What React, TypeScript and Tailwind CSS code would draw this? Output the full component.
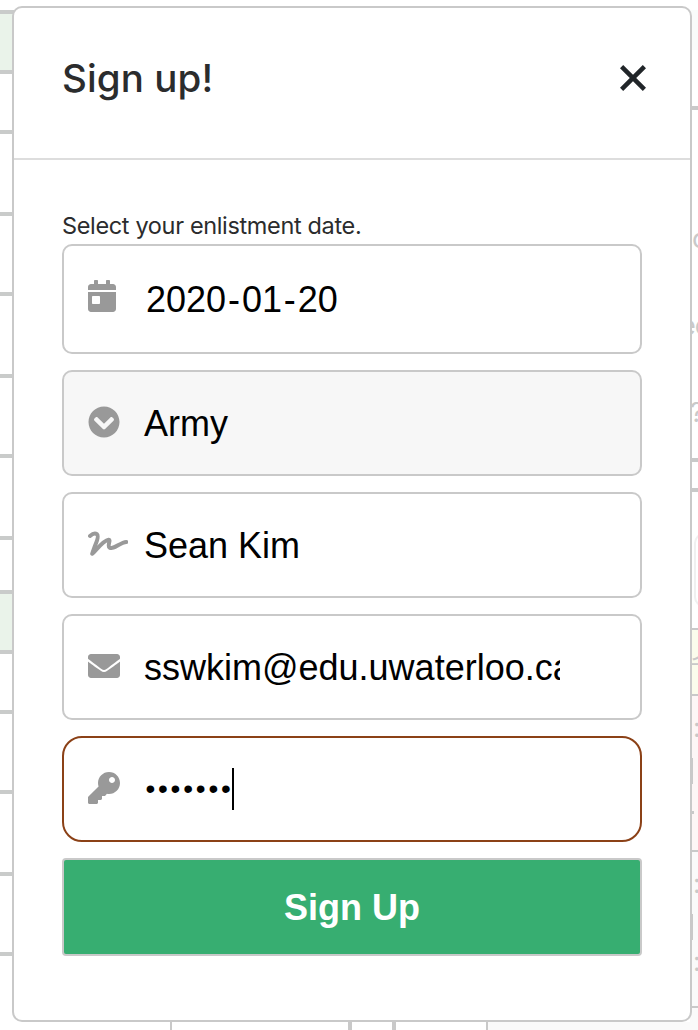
import type { ReactNode } from "react";
import { FaCalendarDay, FaChevronCircleDown, FaEnvelope, FaKey } from "react-icons/fa";

const leftRows = [
  "h-[60px] bg-[#eaf3ea]",
  "h-[60px]",
  "h-[82px]",
  "h-[80px]",
  "h-[82px]",
  "h-[80px]",
  "h-[82px]",
  "h-[54px]",
  "h-[60px] bg-[#eaf3ea]",
  "h-[60px]",
  "h-[80px]",
  "h-[82px]",
  "h-[80px]",
  "h-[70px]",
];

function Backdrop() {
  return (
    <div className="flex h-[1030px] flex-col bg-white">
      <div className="flex h-[1022px] justify-between">
        <div className="w-[14px] pt-[10px]">
          {leftRows.map((row, i) => (
            <div key={i} className={"border-t-4 border-[#c9cbca] " + row} />
          ))}
        </div>
        <div className="w-[8px] overflow-hidden pt-[10px] font-['Inter',sans-serif] text-[27px] leading-[30px] text-[#c9c9c9]">
          <div className="h-[40px] bg-[#f9fbfa]" />
          <div className="mt-[56px] h-[352px] border-t-4 border-[#c9c9c9] pt-[114px]">
            <div className="h-[87px] pl-[2px]">c</div>
            <div className="-ml-[10px] h-[87px] whitespace-nowrap tracking-[-1px]">ec</div>
            <div>?</div>
          </div>
          <div className="h-[30px] border-t-4 border-[#c9c9c9]" />
          <div className="h-[140px] border-t-4 border-[#c9c9c9] pt-[41px] pl-[4px]">
            <div className="h-[74px] w-[30px] rounded-[10px] border-2 border-[#f0f0f0]" />
          </div>
          <div className="h-[66px] border-t-2 border-[#c9c9c9] bg-[#fbfcec] pt-[16px] font-['Noto_Sans_CJK_KR',sans-serif]">
            <div className="whitespace-nowrap">수</div>
          </div>
          <div className="h-[156px] border-t-2 border-[#c9c9c9] bg-[#fdf6f6] pt-[22px]">
            <div className="flex flex-col">
              <div className="h-[40px] pl-[3px] leading-[20px]">:</div>
              <div className="h-[26px] w-[3px] bg-[#c9c9c9]" />
              <div className="mt-[27px] h-[3px] w-[4px] bg-[#c9c9c9]" />
            </div>
          </div>
          <div className="h-[156px] border-t-2 border-[#c9c9c9] bg-[#fafafa] pt-[22px]">
            <div className="h-[40px] pl-[3px] leading-[20px]">:</div>
            <div className="h-[26px] w-[3px] bg-[#c9c9c9]" />
            <div className="mt-[12px] pl-[3px] leading-[20px]">:</div>
          </div>
          <div className="h-[16px] border-t-2 border-[#c9c9c9] bg-[#fafafa]" />
        </div>
      </div>
      <div className="flex h-[8px]">
        <div className="w-[172px] border-r-2 border-[#c9c9c9]" />
        <div className="w-[180px] border-r-4 border-[#c9c9c9]" />
        <div className="w-[44px] border-r-4 border-[#c9c9c9]" />
        <div className="w-[92px] border-r-2 border-[#c9c9c9]" />
        <div className="flex-1 bg-[#fafafa]" />
      </div>
    </div>
  );
}

function SignatureIcon() {
  return (
    <svg
      className="-mt-[2px] h-[32px] w-[40px]"
      viewBox="0 0 40 32"
      fill="none"
      stroke="currentColor"
      strokeWidth="4"
      strokeLinecap="round"
      strokeLinejoin="round"
    >
      <path d="M2 8C4 6.200 7 4.900 9 6.200C11 8 9 13 7.200 17.200C6 20.500 5 23 4.200 25.800C8 22.500 15 12.500 20.500 11.700C23.300 11.900 19 17.500 21.500 19.500C25.500 22.300 32 14.300 38.300 13.900" />
    </svg>
  );
}

function Field({ icon, className, children }: { icon: ReactNode; className: string; children: ReactNode }) {
  return (
    <div className={"flex items-center border-2 pl-6 " + className}>
      <div className="w-[56px] shrink-0 text-[32px] text-[#999999]">{icon}</div>
      {children}
    </div>
  );
}

export default function App() {
  return (
    <div className="relative h-[1030px] w-[698px] overflow-hidden">
      <Backdrop />
      <div className="absolute top-[6px] left-[12px] flex h-[1016px] w-[680px] flex-col rounded-[10px] border-2 border-[#c9c9c9] bg-white">
        <header className="flex h-[152px] items-start justify-between border-b-2 border-[#dddddd] pt-[46px] pr-[42px] pl-12">
          <h1 className="font-['Inter',sans-serif] text-[38.5px] leading-[48px] font-medium tracking-[0.1px] text-[#2b2c2d]">Sign up!</h1>
          <button aria-label="Close" className="mt-[9px]">
            <svg width="30" height="30" viewBox="0 0 30 30" fill="none" stroke="#212529" strokeWidth="4.5">
              <path d="M3.6 3.6 26.4 26.4M26.4 3.6 3.6 26.4" />
            </svg>
          </button>
        </header>
        <form className="flex flex-col px-12 pt-[48px] font-['Liberation_Sans',sans-serif] text-[36px] text-black">
          <label className="h-[36px] font-['Inter',sans-serif] text-[23.5px] leading-[36px] tracking-[-0.35px] text-[#2b2c2d]">
            <span>Select your enlistment date.</span>
          </label>
          <div className="flex flex-col gap-4">
            <Field icon={<FaCalendarDay className="-mt-[6px] -ml-[2px]" />} className="h-[110px] rounded-[10px] border-[#c9c9c9]">
              <span className="pt-[2px] pl-[2px]">
                2020<span className="px-[1.9px]">-</span>01<span className="px-[1.9px]">-</span>20
              </span>
            </Field>
            <Field icon={<FaChevronCircleDown className="-mt-[2px]" />} className="h-[106px] rounded-[10px] border-[#c9c9c9] bg-[#f7f7f7]">
              <span className="pt-[2px]">Army</span>
            </Field>
            <Field icon={<SignatureIcon />} className="h-[106px] rounded-[10px] border-[#c9c9c9]">
              <span className="pt-[2px]">Sean Kim</span>
            </Field>
            <Field icon={<FaEnvelope className="-mt-[2px]" />} className="h-[106px] rounded-[10px] border-[#c9c9c9]">
              <span className="w-[416px] overflow-hidden pt-[2px] whitespace-nowrap">sswkim@edu.uwaterloo.ca</span>
            </Field>
            <Field icon={<FaKey className="-mt-[2px]" />} className="h-[106px] rounded-[20px] border-[#8b4117]">
              <span className="w-[88px] pl-[1.4px] text-[28px] leading-[36px] tracking-[2.8px] whitespace-nowrap">•••••••</span>
              <span className="h-[42px] w-[2px] bg-black" />
            </Field>
            <button className="h-[98px] rounded-[4px] border-2 border-[#c9c9c9] bg-[#37ae71] pt-[1px] font-bold text-white">Sign Up</button>
          </div>
        </form>
      </div>
    </div>
  );
}
